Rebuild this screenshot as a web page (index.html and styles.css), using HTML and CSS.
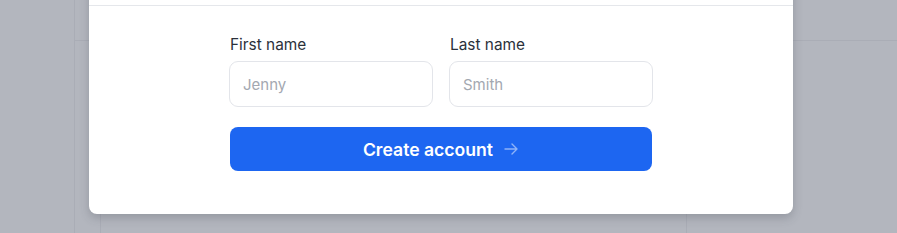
FILE: index.html
```html
<!DOCTYPE html>
<html lang="en">
<head>
    <meta charset="UTF-8">
    <meta name="viewport" content="width=device-width, initial-scale=1.0">
    <title>Create account</title>
    <link rel="stylesheet" href="styles.css">
</head>
<body>
    <div class="backdrop">
        <div class="sidebar"></div>
        <div class="main">
            <div class="topbar"></div>
            <div class="page">
                <div class="page-card"></div>
            </div>
        </div>
    </div>

    <div class="modal">
        <div class="modal-header"></div>
        <form class="modal-body">
            <div class="name-row">
                <label class="field">
                    <span class="field-label">First name</span>
                    <input class="field-input" type="text" placeholder="Jenny" autofocus>
                </label>
                <label class="field">
                    <span class="field-label">Last name</span>
                    <input class="field-input" type="text" placeholder="Smith">
                </label>
            </div>
            <button type="button" class="submit">
                Create account
                <svg class="submit-arrow" width="16" height="16" viewBox="0 0 16 16" fill="none" stroke="currentColor" stroke-width="1.4" stroke-linecap="round" stroke-linejoin="round">
                    <path d="M2 8h12M9 3l5 5-5 5"/>
                </svg>
            </button>
        </form>
    </div>
</body>
</html>
```

FILE: styles.css
```css
* {
    box-sizing: border-box;
}
body {
    margin: 0;
    height: 233px;
    overflow: hidden;
    font-family: Inter, "Noto Sans", sans-serif;
    background: #b3b6be;
}
.backdrop {
    display: flex;
    height: 100%;
}
.sidebar {
    width: 75px;
    border-right: 1px solid #aaadb6;
}
.main {
    flex: 1;
    display: flex;
    flex-direction: column;
}
.topbar {
    height: 41px;
    border-bottom: 1px solid #aaadb6;
}
.page {
    flex: 1;
    padding-left: 25px;
}
.page-card {
    width: 587px;
    height: 100%;
    border-left: 1px solid #aaadb6;
    border-right: 1px solid #aaadb6;
}
.modal {
    position: absolute;
    left: 89px;
    top: -60px;
    width: 704px;
    background: #fff;
    border-radius: 0 0 8px 8px;
    box-shadow: 0 4px 10px rgba(60, 64, 75, 0.25);
}
.modal-header {
    height: 66px;
    border-bottom: 1px solid #e5e7eb;
}
.modal-body {
    width: 424px;
    margin: 0 auto;
    padding: 29px 0 43px;
    display: flex;
    flex-direction: column;
    gap: 20px;
}
.name-row {
    display: grid;
    grid-template-columns: 1fr 1fr;
    gap: 16px;
}
.field {
    display: flex;
    flex-direction: column;
    gap: 6px;
    min-width: 0;
}
.field-label {
    font-size: 15.4px;
    line-height: 20px;
    color: #2b313b;
    padding-left: 1px;
}
.field-input {
    width: 100%;
    height: 46px;
    border: 1px solid #e3e5ea;
    border-radius: 9px;
    padding: 0 13px;
    font-family: inherit;
    font-size: 15px;
    color: #111827;
    outline: none;
    caret-color: #1f2937;
}
.field-input::placeholder {
    color: #a3a8b1;
}
.submit {
    height: 44px;
    margin-left: 1px;
    margin-right: 1px;
    border: none;
    border-radius: 8px;
    background: #1d66f1;
    color: #fff;
    font-family: inherit;
    font-size: 17.6px;
    font-weight: 600;
    display: flex;
    align-items: center;
    justify-content: center;
    gap: 10px;
    cursor: pointer;
}
.submit-arrow {
    color: rgba(255, 255, 255, 0.5);
}
```
